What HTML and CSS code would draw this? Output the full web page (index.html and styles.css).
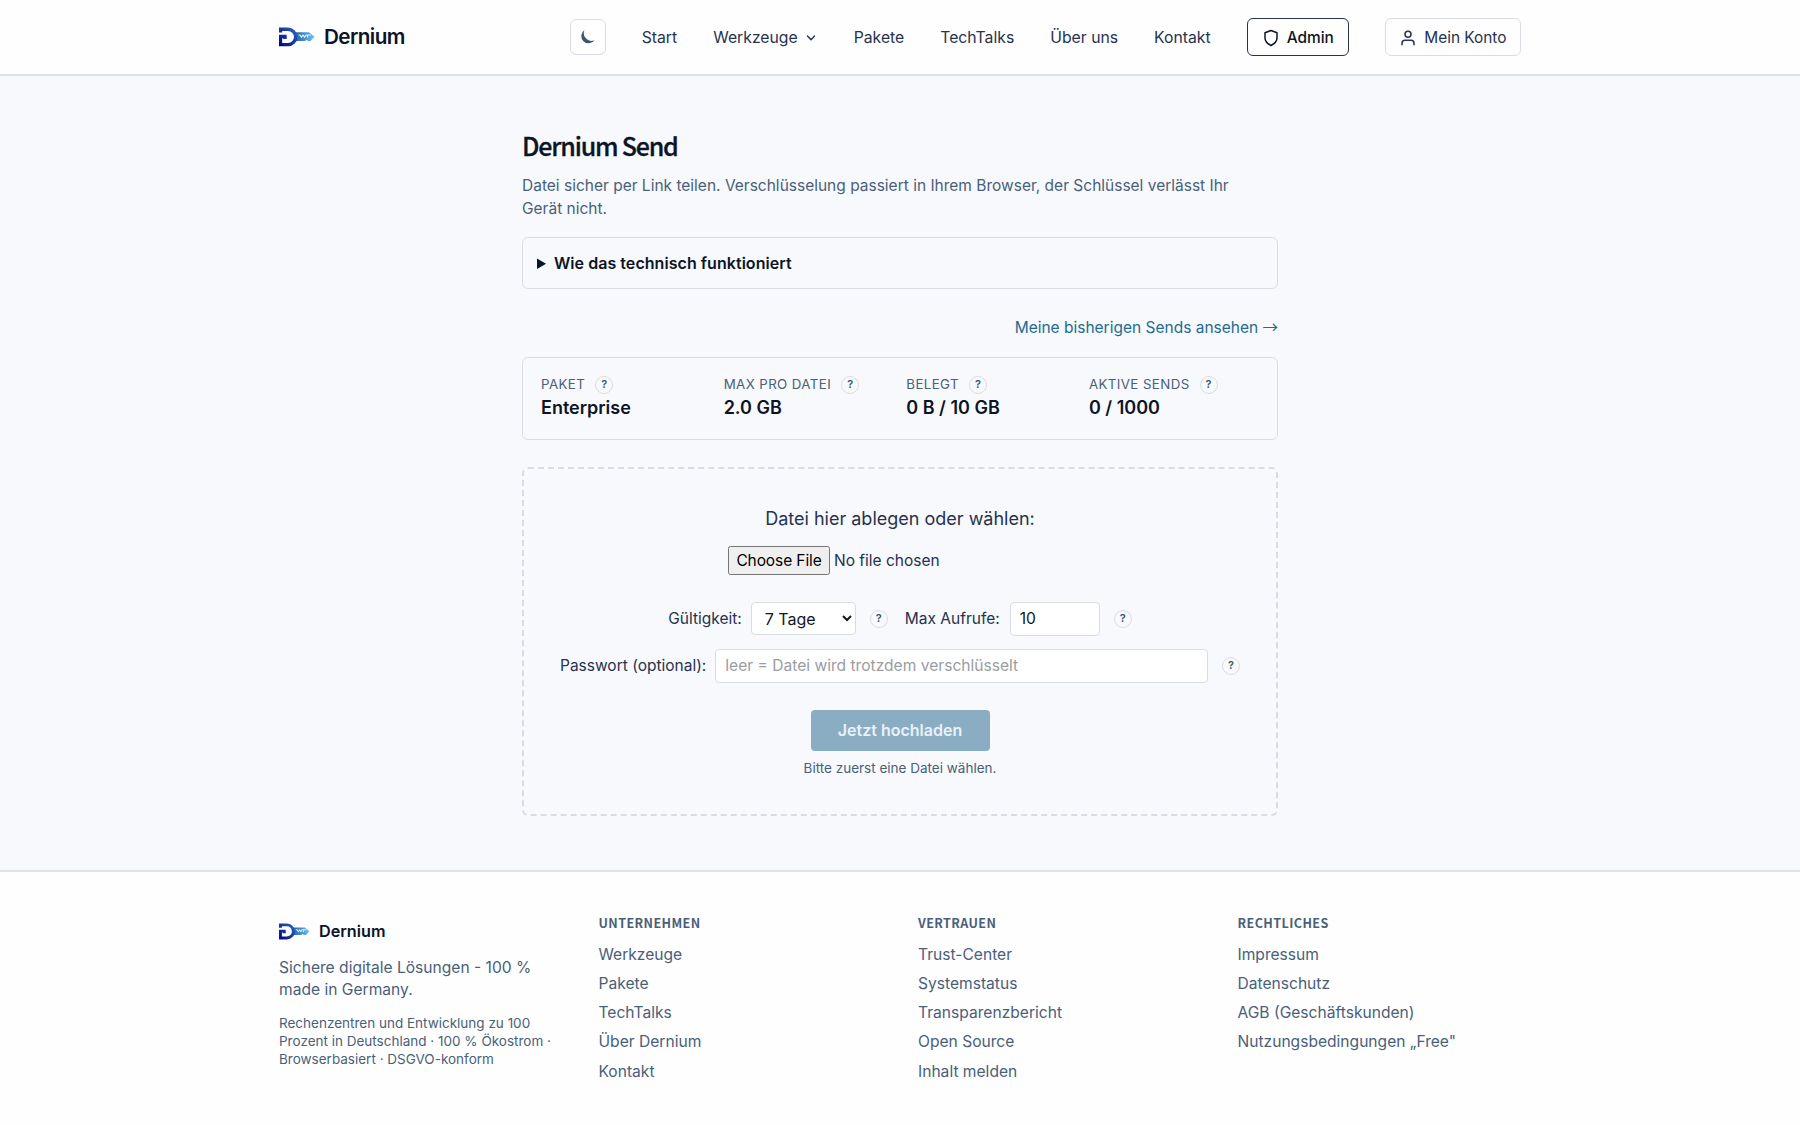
FILE: index.html
```
<!DOCTYPE html>
<html lang="de">
<head>
  <meta charset="UTF-8">
  <meta name="viewport" content="width=device-width, initial-scale=1.0">
  <title>Dernium Send</title>
  <link rel="stylesheet" href="styles.css">
</head>
<body>

  <!-- Logo shared by header and footer -->
  <svg class="sprite" width="0" height="0" aria-hidden="true">
    <defs>
      <linearGradient id="logo-d" gradientUnits="userSpaceOnUse" x1="0" y1="18" x2="17" y2="2">
        <stop offset="0" stop-color="#06067c"/>
        <stop offset="1" stop-color="#2864be"/>
      </linearGradient>
      <linearGradient id="logo-key" x1="0" y1="0" x2="1" y2="0">
        <stop offset="0" stop-color="#2458a8"/>
        <stop offset="1" stop-color="#6cc4f0"/>
      </linearGradient>
    </defs>
    <symbol id="logo" viewBox="0 0 36 20">
      <path d="M15 5.300h15l5.500 4.400-4 4.300h-2.500l-1.500-1.300-1.500 1.300H15z" fill="url(#logo-key)"/>
      <path d="M19.500 8h1.500l1.500 2.200 1.500-2.200 1.500 2.200L27 8h5M28.500 10.500v-2" fill="none" stroke="#d8efff" stroke-width="1.200"/>
      <path d="M1.500 5.500V2.200h7.500a7.700 7.700 0 0 1 0 15.400H1.500V9.500h4.500v2.500" fill="none" stroke="url(#logo-d)" stroke-width="3.400"/>
    </symbol>
  </svg>

  <header class="site-header">
    <div class="container header-inner">
      <a href="#" class="brand"><svg class="logo"><use href="#logo"/></svg>Dernium</a>
      <nav class="nav">
        <button class="theme-toggle" aria-label="Dunkles Design">
          <svg width="16" height="16" viewBox="0 0 16 16"><path d="M4.500 1A7.300 7.300 0 1 0 14.600 11.200 7.700 7.700 0 0 1 4.500 1z" fill="#3c5670"/></svg>
        </button>
        <a href="#">Start</a>
        <a href="#" class="has-menu">Werkzeuge
          <svg width="10" height="10" viewBox="0 0 10 10" fill="none" stroke="currentColor" stroke-width="1.400" stroke-linecap="round" stroke-linejoin="round"><path d="M1.500 3l3.500 3.800L8.500 3"/></svg>
        </a>
        <a href="#">Pakete</a>
        <a href="#">TechTalks</a>
        <a href="#">Über uns</a>
        <a href="#">Kontakt</a>
        <a href="#" class="nav-btn nav-admin">
          <svg width="18" height="18" viewBox="0 0 24 24" fill="none" stroke="currentColor" stroke-width="2" stroke-linejoin="round"><path d="M12 22s8-4 8-10V5l-8-3-8 3v7c0 6 8 10 8 10z"/></svg>
          Admin
        </a>
        <a href="#" class="nav-btn">
          <svg width="18" height="18" viewBox="0 0 24 24" fill="none" stroke="currentColor" stroke-width="2" stroke-linecap="round" stroke-linejoin="round"><path d="M20 21v-2a4 4 0 0 0-4-4H8a4 4 0 0 0-4 4v2"/><circle cx="12" cy="7" r="4"/></svg>
          Mein Konto
        </a>
      </nav>
    </div>
  </header>

  <main class="send">
    <h1>Dernium Send</h1>
    <p class="lead">Datei sicher per Link teilen. Verschlüsselung passiert in Ihrem Browser, der Schlüssel verlässt Ihr Gerät nicht.</p>

    <details class="tech">
      <summary>Wie das technisch funktioniert</summary>
    </details>

    <p class="history"><a href="#">Meine bisherigen Sends ansehen <span class="arrow">→</span></a></p>

    <section class="stats">
      <div class="stat">
        <div class="stat-label">Paket <span class="help">?</span></div>
        <div class="stat-value">Enterprise</div>
      </div>
      <div class="stat">
        <div class="stat-label">Max pro Datei <span class="help">?</span></div>
        <div class="stat-value">2.0 GB</div>
      </div>
      <div class="stat">
        <div class="stat-label">Belegt <span class="help">?</span></div>
        <div class="stat-value">0 B / 10 GB</div>
      </div>
      <div class="stat">
        <div class="stat-label">Aktive Sends <span class="help">?</span></div>
        <div class="stat-value">0 / 1000</div>
      </div>
    </section>

    <form class="dropzone">
      <p class="drop-title">Datei hier ablegen oder wählen:</p>
      <input type="file" class="file-input">
      <div class="row">
        <label for="ttl">Gültigkeit:</label>
        <select id="ttl" class="field field-select"><option>7 Tage</option></select>
        <span class="help">?</span>
        <label for="max" class="label-max">Max Aufrufe:</label>
        <input id="max" type="text" class="field field-max" value="10">
        <span class="help">?</span>
      </div>
      <div class="row">
        <label for="pw">Passwort (optional):</label>
        <input id="pw" type="text" class="field field-pw" placeholder="leer = Datei wird trotzdem verschlüsselt">
        <span class="help">?</span>
      </div>
      <button type="button" class="upload" disabled>Jetzt hochladen</button>
      <p class="hint">Bitte zuerst eine Datei wählen.</p>
    </form>
  </main>

  <footer class="site-footer">
    <div class="container footer-grid">
      <div>
        <a href="#" class="brand brand-small"><svg class="logo"><use href="#logo"/></svg>Dernium</a>
        <p class="claim">Sichere digitale Lösungen - 100 % made in Germany.</p>
        <p class="facts">Rechenzentren und Entwicklung zu 100 Prozent in Deutschland · 100 % Ökostrom · Browserbasiert · DSGVO-konform</p>
      </div>
      <div>
        <h2>Unternehmen</h2>
        <ul>
          <li><a href="#">Werkzeuge</a></li>
          <li><a href="#">Pakete</a></li>
          <li><a href="#">TechTalks</a></li>
          <li><a href="#">Über Dernium</a></li>
          <li><a href="#">Kontakt</a></li>
        </ul>
      </div>
      <div>
        <h2>Vertrauen</h2>
        <ul>
          <li><a href="#">Trust-Center</a></li>
          <li><a href="#">Systemstatus</a></li>
          <li><a href="#">Transparenzbericht</a></li>
          <li><a href="#">Open Source</a></li>
          <li><a href="#">Inhalt melden</a></li>
        </ul>
      </div>
      <div>
        <h2>Rechtliches</h2>
        <ul>
          <li><a href="#">Impressum</a></li>
          <li><a href="#">Datenschutz</a></li>
          <li><a href="#">AGB (Geschäftskunden)</a></li>
          <li><a href="#">Nutzungsbedingungen „Free"</a></li>
        </ul>
      </div>
    </div>
  </footer>

</body>
</html>
```
FILE: styles.css
```
* {
  box-sizing: border-box;
}

html {
  height: 100%;
  overflow: hidden;
}

body {
  margin: 0;
  background: #f7f9fc;
  color: #26324f;
  font-family: Inter, sans-serif;
  font-size: 15.5px;
  line-height: 22.5px;
}

a {
  color: inherit;
  text-decoration: none;
}

p, h1, h2, ul {
  margin: 0;
  padding: 0;
}

.sprite {
  position: absolute;
}

.container {
  width: 1242px;
  margin: 0 auto;
}

/* Header */
.site-header {
  height: 76px;
  background: #fefefe;
  border-bottom: 2px solid #dfe3e9;
}

.header-inner {
  height: 74px;
  display: flex;
  align-items: center;
  justify-content: space-between;
}

.brand {
  display: flex;
  align-items: center;
  gap: 9px;
  color: #0c1426;
  font-size: 20.7px;
  font-weight: 600;
  letter-spacing: -0.6px;
}

.logo {
  width: 36px;
  height: 20px;
}

.nav {
  display: flex;
  align-items: center;
  gap: 36px;
  font-size: 15.75px;
  line-height: 24px;
}

.nav a {
  padding-top: 1px;
}

.theme-toggle {
  width: 36px;
  height: 36px;
  padding: 0;
  display: flex;
  align-items: center;
  justify-content: center;
  background: #fff;
  border: 1px solid #d9dde3;
  border-radius: 6px;
}

.has-menu {
  display: flex;
  align-items: center;
  gap: 8px;
  padding-right: 2px;
}

.nav .nav-btn {
  height: 38px;
  padding: 1px 13.5px 0;
  display: flex;
  align-items: center;
  gap: 7px;
  border: 1px solid #d9dde3;
  border-radius: 6px;
  font-size: 15.4px;
}

.nav .nav-admin {
  padding: 1px 14px 0;
  color: #0c1426;
  font-weight: 500;
  border-color: #26324f;
}

/* Send page */
.send {
  width: 756px;
  margin: 0 auto;
  padding: 52px 0 54px;
}

h1 {
  color: #0c1426;
  font-family: "Noto Sans CJK SC", sans-serif;
  font-size: 25px;
  font-weight: 500;
  line-height: 34px;
  letter-spacing: -1.2px;
  -webkit-text-stroke: 0.3px #0c1426;
  margin-bottom: 13px;
}

.lead {
  color: #4a5f7a;
  padding-right: 30px;
  margin-bottom: 17px;
}

.tech {
  height: 52px;
  padding: 14px;
  border: 1px solid #d9dde3;
  border-radius: 6px;
}

.tech summary {
  color: #0c1426;
  font-size: 16px;
  font-weight: 600;
  letter-spacing: 0.05px;
}

.history {
  color: #246a93;
  text-align: right;
  margin: 28px 0 17px;
}

.arrow {
  font-family: "Noto Sans CJK SC", sans-serif;
  line-height: 1;
}

.stats {
  height: 83px;
  padding: 16px 18px;
  display: grid;
  grid-template-columns: repeat(4, 1fr);
  column-gap: 12.6px;
  border: 1px solid #d9dde3;
  border-radius: 6px;
  margin-bottom: 27px;
}

.stat-label {
  height: 22px;
  display: flex;
  align-items: center;
  gap: 10px;
  color: #4a5f7a;
  font-size: 13.3px;
  letter-spacing: 0.4px;
  text-transform: uppercase;
  white-space: nowrap;
}

.stat-value {
  color: #0c1426;
  font-size: 18px;
  font-weight: 600;
  line-height: 24px;
}

.help {
  width: 18px;
  height: 18px;
  flex: none;
  display: flex;
  align-items: center;
  justify-content: center;
  border: 1px solid #d9dde3;
  border-radius: 50%;
  color: #3c5670;
  font-size: 11px;
  font-weight: 600;
  letter-spacing: 0;
}

.dropzone {
  height: 349px;
  padding: 36px 36px 30px;
  display: flex;
  flex-direction: column;
  align-items: center;
  border: 2px dashed #d9dde3;
  border-radius: 6px;
}

.drop-title {
  font-size: 18px;
  line-height: 27px;
}

.file-input {
  width: 344px;
  height: 29px;
  margin: 14px 0 27px;
  color: #26324f;
  font: inherit;
}

.file-input::file-selector-button {
  width: 102px;
  height: 29px;
  font: inherit;
  letter-spacing: -0.1px;
}

.row {
  width: 100%;
  display: flex;
  align-items: center;
  justify-content: center;
  gap: 9px;
  margin-bottom: 13px;
}

.row label {
  padding-top: 2px;
}

.row .help {
  margin-left: 5px;
}

.row .label-max {
  margin-left: 8px;
  margin-right: 1px;
}

.field {
  height: 34px;
  padding: 0 9px;
  background: #fff;
  border: 1px solid #d9dde3;
  border-radius: 4px;
  color: #14161c;
  font-family: inherit;
  font-size: 15.6px;
}

.field::placeholder {
  color: #9a9da2;
}

.field-select {
  width: 105px;
  height: 33px;
  font-size: 16px;
}

.field-max {
  width: 90px;
}

.field-pw {
  flex: 1;
}

.upload {
  width: 179px;
  height: 41px;
  flex: none;
  margin-top: 14px;
  background: #8badc4;
  border: 0;
  border-radius: 4px;
  color: #eaf1f8;
  font-family: inherit;
  font-size: 16px;
  font-weight: 600;
}

.hint {
  color: #4a5f7a;
  font-size: 13.5px;
  margin-top: 6px;
}

/* Footer */
.site-footer {
  height: 280px;
  padding-top: 44px;
  background: #fefefe;
  border-top: 2px solid #dfe3e9;
  color: #4a5f7a;
}

.footer-grid {
  display: grid;
  grid-template-columns: repeat(4, 1fr);
  column-gap: 36px;
}

.brand-small {
  height: 31px;
  font-size: 16.2px;
  letter-spacing: 0;
}

.brand-small .logo {
  width: 31px;
  height: 17px;
}

.claim {
  margin: 10px 0 12px;
  font-size: 15.6px;
}

.facts {
  font-size: 13.5px;
  line-height: 18px;
}

h2 {
  font-family: "Noto Sans CJK SC", sans-serif;
  font-size: 12.6px;
  font-weight: 700;
  line-height: 14px;
  letter-spacing: 0.4px;
  text-transform: uppercase;
}

.footer-grid ul {
  list-style: none;
  margin-top: 14px;
  font-size: 15.6px;
}

.footer-grid li {
  height: 29.25px;
}
```
